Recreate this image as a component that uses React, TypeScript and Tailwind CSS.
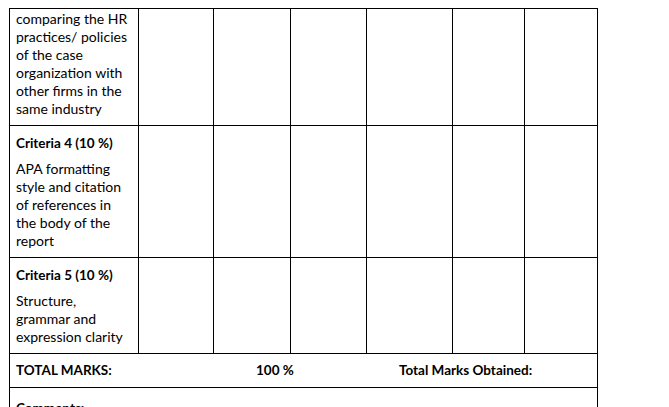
const widths = [129, 75, 77, 75, 86, 72, 73];

type Row = {
  title?: string;
  lines: string[];
  height: number;
};

const rows: Row[] = [
  {
    lines: [
      "comparing the HR",
      "practices/ policies",
      "of the case",
      "organization with",
      "other firms in the",
      "same industry",
    ],
    height: 117,
  },
  {
    title: "Criteria 4 (10 %)",
    lines: ["APA formatting", "style and citation", "of references in", "the body of the", "report"],
    height: 132,
  },
  {
    title: "Criteria 5 (10 %)",
    lines: ["Structure,", "grammar and", "expression clarity"],
    height: 96,
  },
];

export default function App() {
  return (
    <div
      className="w-[669px] h-[407px] overflow-hidden bg-white pl-[9px] pt-[8px] text-[14px] text-black"
      style={{ fontFamily: "Lato, 'Open Sans', sans-serif" }}
    >
      <table className="border-collapse table-fixed w-[589px]">
        <colgroup>
          {widths.map((w, i) => (
            <col key={i} style={{ width: w }} />
          ))}
        </colgroup>
        <tbody>
          {rows.map((r, i) => (
            <tr key={i} style={{ height: r.height }}>
              <td className="border border-black align-top px-[6px] pt-[1px] leading-[18px]">
                {r.title && (
                  <p className="font-bold text-[13.5px] mt-[7px] mb-[8px]">{r.title}</p>
                )}
                {r.lines.map((l) => (
                  <p key={l}>{l}</p>
                ))}
              </td>
              {widths.slice(1).map((_, j) => (
                <td key={j} className="border border-black" />
              ))}
            </tr>
          ))}
          <tr className="h-[34px]">
            <td colSpan={7} className="border border-black px-[6px] font-bold text-[13.5px]">
              <div className="flex items-center">
                <span className="w-[240px]">TOTAL MARKS:</span>
                <span className="w-[143px]">100 %</span>
                <span>Total Marks Obtained:</span>
              </div>
            </td>
          </tr>
          <tr className="h-[40px]">
            <td colSpan={7} className="border border-black px-[6px] pt-[10px] align-top font-bold text-[13.5px]">
              Comments:
            </td>
          </tr>
        </tbody>
      </table>
    </div>
  );
}
